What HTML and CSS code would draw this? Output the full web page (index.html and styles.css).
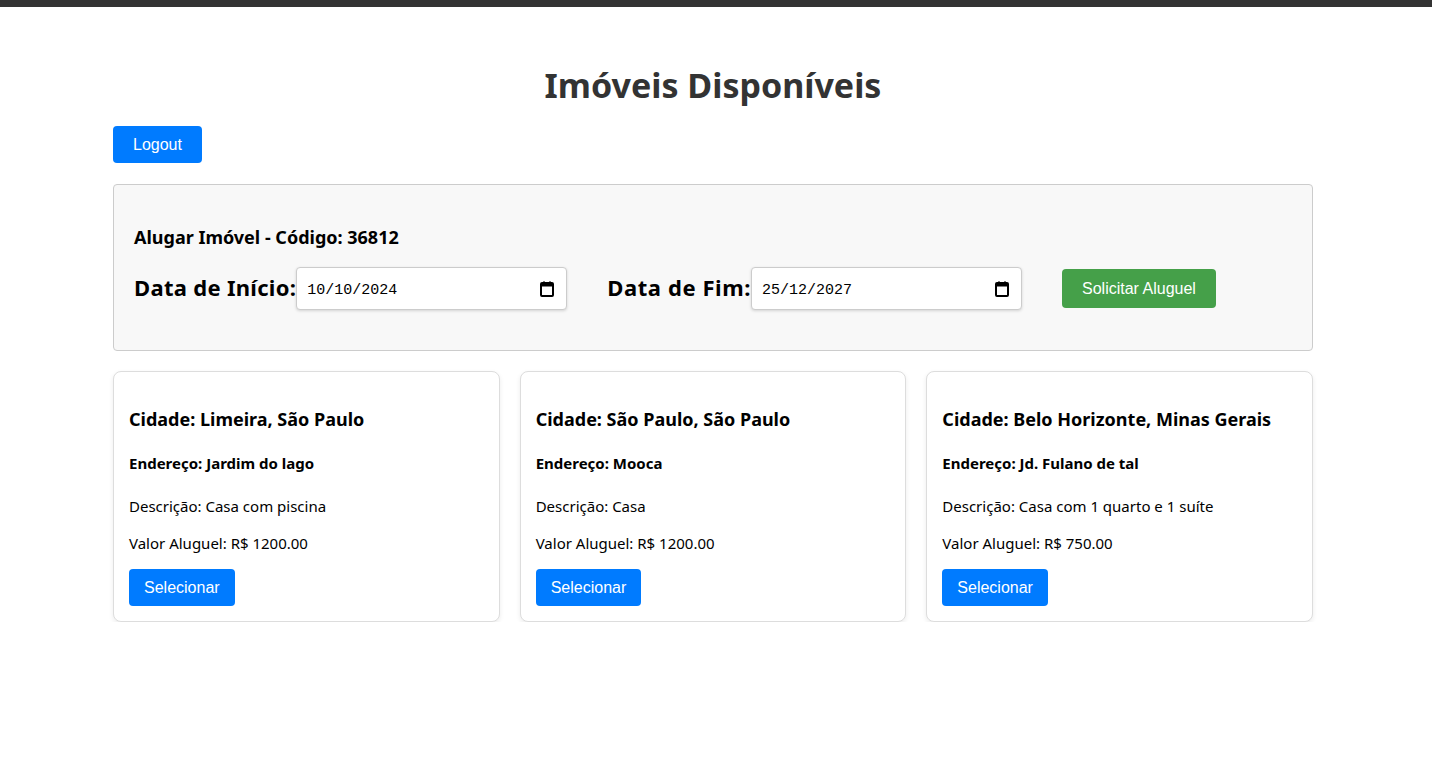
FILE: index.html
```html
<!DOCTYPE html>
<html lang="pt-BR">
<head>
<meta charset="utf-8">
<title>Imóveis Disponíveis</title>
<link rel="stylesheet" href="styles.css">
</head>
<body>
<div class="topbar"></div>
<div class="page">
<main class="container">
  <h1 class="title">Imóveis Disponíveis</h1>
  <button class="btn btn-blue logout">Logout</button>
  <section class="rent-form">
    <h3 class="rent-title">Alugar Imóvel - Código: 36812</h3>
    <div class="rent-row">
      <label class="date-label">Data de Início:</label>
      <div class="date-field">
        <input class="date-input" type="text" value="10/10/2024">
        <svg class="cal-icon" width="14" height="16" viewBox="0 0 14 16"><path d="M3 0.5h2v2H3zM9 0.5h2v2H9z" fill="#000"/><rect x="1" y="2" width="12" height="13" rx="1" fill="none" stroke="#000" stroke-width="2"/><rect x="1" y="2" width="12" height="3.5" fill="#000"/></svg>
      </div>
      <label class="date-label second">Data de Fim:</label>
      <div class="date-field">
        <input class="date-input" type="text" value="25/12/2027">
        <svg class="cal-icon" width="14" height="16" viewBox="0 0 14 16"><path d="M3 0.5h2v2H3zM9 0.5h2v2H9z" fill="#000"/><rect x="1" y="2" width="12" height="13" rx="1" fill="none" stroke="#000" stroke-width="2"/><rect x="1" y="2" width="12" height="3.5" fill="#000"/></svg>
      </div>
      <button class="btn btn-green">Solicitar Aluguel</button>
    </div>
  </section>
  <section class="cards">
    <article class="card">
      <h3 class="city">Cidade: Limeira, São Paulo</h3>
      <p class="addr">Endereço: Jardim do lago</p>
      <p class="info">Descrição: Casa com piscina</p>
      <p class="info">Valor Aluguel: R$ 1200.00</p>
      <button class="btn btn-blue">Selecionar</button>
    </article>
    <article class="card">
      <h3 class="city">Cidade: São Paulo, São Paulo</h3>
      <p class="addr">Endereço: Mooca</p>
      <p class="info">Descrição: Casa</p>
      <p class="info">Valor Aluguel: R$ 1200.00</p>
      <button class="btn btn-blue">Selecionar</button>
    </article>
    <article class="card">
      <h3 class="city">Cidade: Belo Horizonte, Minas Gerais</h3>
      <p class="addr">Endereço: Jd. Fulano de tal</p>
      <p class="info">Descrição: Casa com 1 quarto e 1 suíte</p>
      <p class="info">Valor Aluguel: R$ 750.00</p>
      <button class="btn btn-blue">Selecionar</button>
    </article>
  </section>
</main>
</div>
</body>
</html>
```

FILE: styles.css
```css
* { box-sizing: border-box; }
html, body { margin: 0; padding: 0; background: #fff; }
body { font-family: "Noto Sans", "Open Sans", sans-serif; color: #000; }
.topbar { height: 7px; background: #333; }
.page { padding-right: 6px; }
.container { width: 1200px; margin: 0 auto; padding-top: 56px; }
.title {
  margin: 0 0 19px;
  text-align: center;
  font-size: 34px;
  line-height: 44px;
  font-weight: 700;
  color: #333;
}
.btn {
  font-family: "Liberation Sans", Arial, sans-serif;
  font-size: 16px;
  color: #fff;
  border: none;
  border-radius: 4px;
  padding: 10px 15px;
  line-height: 17px;
  cursor: pointer;
}
.btn-blue { background: #007bff; }
.btn-green { background: #45a049; padding: 11px 20px; margin-left: 40px; }
.logout { display: block; padding: 10px 20px; }
.rent-form {
  margin-top: 21px;
  background: #f8f8f8;
  border: 1px solid #ccc;
  border-radius: 4px;
  padding: 20px;
  height: 167px;
}
.rent-title { margin: 20px 0 18px; font-size: 18px; line-height: 24px; font-weight: 700; }
.rent-row { display: flex; align-items: center; }
.date-label { font-size: 22px; font-weight: 700; letter-spacing: 0.3px; margin-bottom: 4px; }
.date-label.second { margin-left: 40px; letter-spacing: 0.58px; }
.date-field { position: relative; width: 271px; height: 43px; }
.date-input {
  width: 100%;
  height: 100%;
  padding: 3px 10px 0;
  border: 1px solid #ccc;
  border-radius: 4px;
  box-shadow: 0 1px 3px rgba(0,0,0,0.15);
  font-family: "Liberation Mono", "DejaVu Sans Mono", monospace;
  font-size: 15px;
  color: #000;
  background: #fff;
}
.cal-icon { position: absolute; right: 13px; top: 14px; }
.cards {
  margin-top: 20px;
  display: grid;
  grid-template-columns: repeat(3, 1fr);
  gap: 20px;
}
.card {
  background: #fff;
  border: 1px solid #ddd;
  border-radius: 8px;
  box-shadow: 0 2px 5px rgba(0,0,0,0.08);
  padding: 15px;
  height: 251px;
}
.city { margin: 20px 0 22px; font-size: 18px; line-height: 24px; font-weight: 700; }
.addr { margin: 0 0 22px; font-size: 15px; font-weight: 700; line-height: 20px; }
.info { margin: 0 0 15px; font-size: 15px; line-height: 22px; }
```
